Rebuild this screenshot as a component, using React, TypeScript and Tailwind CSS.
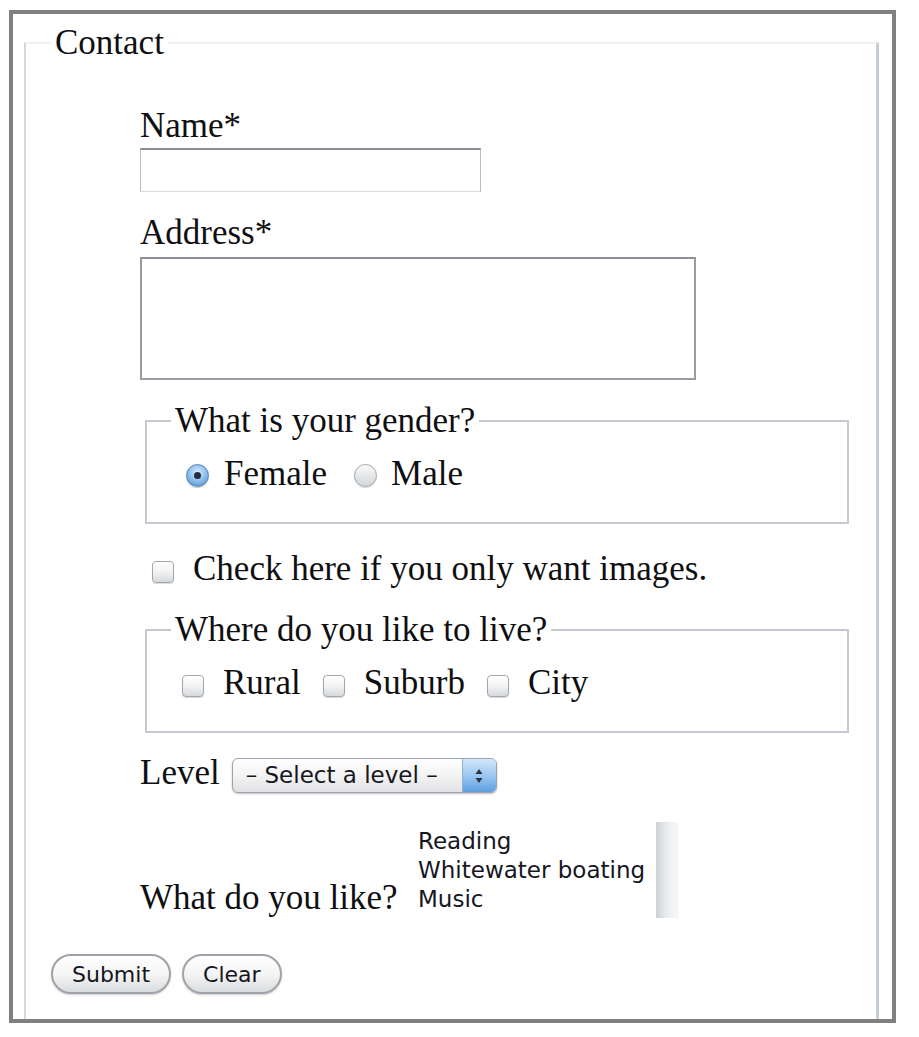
const serif = "font-['Liberation_Serif',serif] text-[35px] leading-[40px] text-[#0f0f12]";
const sans = "font-['DejaVu_Sans',sans-serif] text-[#16161e]";

function Checkbox() {
  return (
    <span className="mt-[12px] block w-[22px] h-[22px] shrink-0 rounded-[4px] border border-[#a3a7ac] bg-linear-to-b from-white via-[#f1f2f3] to-[#d6d9dc] shadow-[0_1px_1px_rgba(0,0,0,0.15)]" />
  );
}

function Radio({ checked }: { checked?: boolean }) {
  if (checked) {
    return (
      <span className="mt-[10px] flex items-center justify-center w-[23px] h-[23px] shrink-0 rounded-full border border-[#4f86bd] bg-[radial-gradient(circle_at_50%_35%,#d8ecfc,#7fb4e6_60%,#3f7fc0)] shadow-[0_1px_1px_rgba(0,0,0,0.2)]">
        <span className="block w-[7px] h-[7px] rounded-full bg-[#1f2d3d]" />
      </span>
    );
  }
  return (
    <span className="mt-[10px] block w-[23px] h-[23px] shrink-0 rounded-full border border-[#a0a5ab] bg-linear-to-b from-[#fafafa] to-[#d3d6da] shadow-[0_1px_1px_rgba(0,0,0,0.15)]" />
  );
}

export default function App() {
  return (
    <div className="w-[919px] h-[1037px] bg-white pt-[10px] pl-[9px]">
      <div className="w-[887px] h-[1013px] border-4 border-[#808080] overflow-hidden">
        <fieldset className="ml-[11px] mt-[9px] w-[855px] h-[1100px] border-t-2 border-l-2 border-r-[3px] border-t-[#eef0f2] border-l-[#d4d8dc] border-r-[#c6cdd4] pl-[25px]">
          <legend className={`px-1 ${serif}`}>Contact</legend>

          <div className="pl-[89px]">
            <label className={`block mt-[43px] ${serif}`}>Name*</label>
            <input
              type="text"
              className="block mt-[2px] w-[341px] h-[44px] border-t-2 border-x border-b border-t-[#898e95] border-x-[#b9bdc2] border-b-[#d9dcdf] bg-white outline-none"
            />

            <label className={`block mt-[21px] ${serif}`}>Address*</label>
            <textarea className="block mt-[4px] w-[556px] h-[123px] border-2 border-[#979ca3] border-t-[#8b9096] bg-white resize-none outline-none" />

            <fieldset className="mt-[21px] ml-[5px] w-[704px] border-2 border-[#c3c9cf] pl-[24px] pb-[28px]">
              <legend className={`px-1 ${serif}`}>What is your gender?</legend>
              <div className={`flex items-start pl-[15px] mt-[13px] ${serif}`}>
                <Radio checked />
                <span className="ml-[15px]">Female</span>
                <span className="ml-[27px]">
                  <Radio />
                </span>
                <span className="ml-[14px]">Male</span>
              </div>
            </fieldset>

            <div className={`flex items-start pl-[12px] mt-[25px] ${serif}`}>
              <Checkbox />
              <span className="ml-[19px]">Check here if you only want images.</span>
            </div>

            <fieldset className="mt-[21px] ml-[5px] w-[704px] border-2 border-[#c3c9cf] pl-[24px] pb-[28px]">
              <legend className={`px-1 ${serif}`}>Where do you like to live?</legend>
              <div className={`flex items-start pl-[11px] mt-[13px] ${serif}`}>
                <Checkbox />
                <span className="ml-[19px]">Rural</span>
                <span className="ml-[22px]">
                  <Checkbox />
                </span>
                <span className="ml-[19px]">Suburb</span>
                <span className="ml-[22px]">
                  <Checkbox />
                </span>
                <span className="ml-[19px]">City</span>
              </div>
            </fieldset>

            <div className="flex items-end mt-[20px]">
              <span className={serif}>Level</span>
              <div className="ml-[12px] flex w-[265px] h-[35px] rounded-[6px] border border-[#9aa3ae] bg-linear-to-b from-white via-[#f3f3f3] to-[#e1e2e4] shadow-[0_1px_2px_rgba(0,0,0,0.25)] overflow-hidden">
                <span className={`flex-1 flex items-center pl-[13px] text-[23px] ${sans}`}>– Select a level –</span>
                <span className="flex items-center justify-center w-[34px] bg-linear-to-b from-[#d3e7fa] via-[#9cc8f0] to-[#5d9fe2] border-l border-[#8fb2d6]">
                  <svg width="10" height="20" viewBox="0 0 10 20">
                    <path d="M5 3 L8.5 8 L1.5 8 Z" fill="#2a3440" />
                    <path d="M5 17 L8.5 12 L1.5 12 Z" fill="#2a3440" />
                  </svg>
                </span>
              </div>
            </div>

            <div className="flex items-end mt-[29px]">
              <span className={`w-[272px] shrink-0 whitespace-nowrap ${serif}`}>What do you like?</span>
              <div className="flex w-[268px] h-[96px]">
                <div className={`flex-1 flex flex-col pl-[6px] pt-[5px] text-[23px] leading-[29px] ${sans}`}>
                  <span>Reading</span>
                  <span className="whitespace-nowrap">Whitewater boating</span>
                  <span>Music</span>
                </div>
                <div className="mr-[2px] w-[22px] h-[96px] bg-linear-to-r from-[#ccd1d7] via-[#e9ecef] to-[#f7f8f9] border-r border-[#eef0f2]" />
              </div>
            </div>
          </div>

          <div className="flex gap-[11px] mt-[36px]">
            <button className={`h-[40px] px-[19px] rounded-full border-2 border-[#9ea3a9] bg-linear-to-b from-white via-[#f5f5f5] to-[#dadcdf] shadow-[0_1px_2px_rgba(0,0,0,0.2)] text-[22px] ${sans}`}>
              Submit
            </button>
            <button className={`h-[40px] px-[19px] rounded-full border-2 border-[#9ea3a9] bg-linear-to-b from-white via-[#f5f5f5] to-[#dadcdf] shadow-[0_1px_2px_rgba(0,0,0,0.2)] text-[22px] ${sans}`}>
              Clear
            </button>
          </div>
        </fieldset>
      </div>
    </div>
  );
}
